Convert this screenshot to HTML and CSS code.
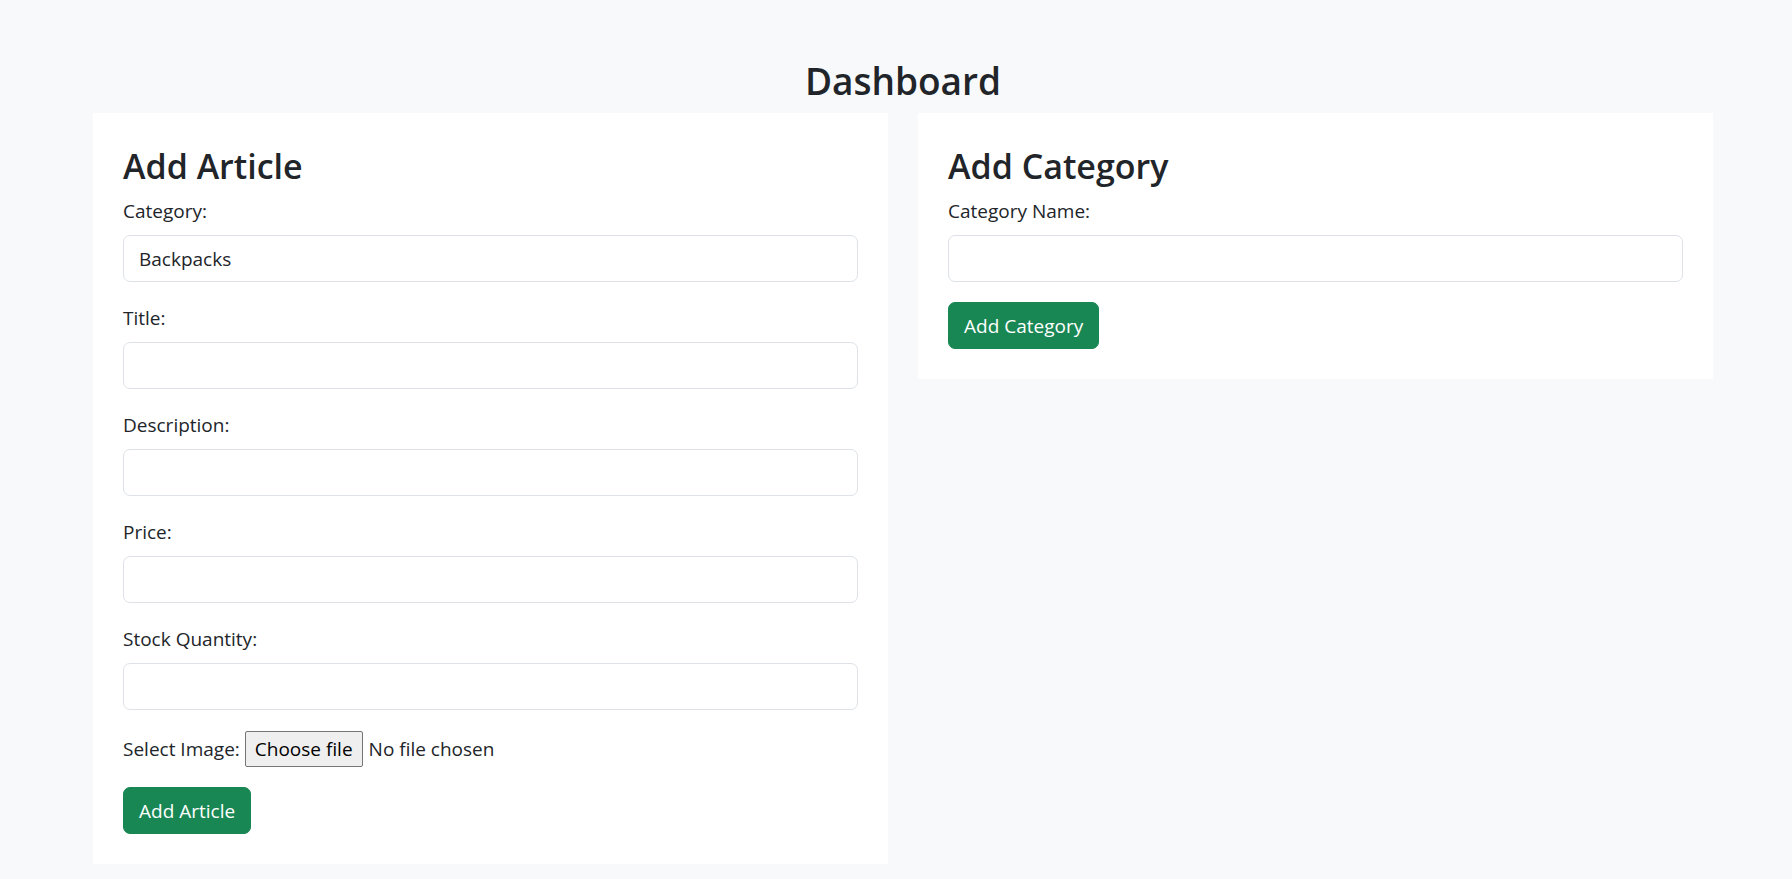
FILE: index.html
```html
<!DOCTYPE html>
<html lang="en">
<head>
<meta charset="utf-8">
<title>Dashboard</title>
<link rel="stylesheet" href="styles.css">
</head>
<body>
<div class="page">
  <h2 class="page-title">Dashboard</h2>
  <div class="columns">
    <section class="card">
      <h3 class="card-title">Add Article</h3>
      <form class="form">
        <div class="field">
          <label class="label" for="cat">Category:</label>
          <input class="control" id="cat" type="text" value="Backpacks">
        </div>
        <div class="field">
          <label class="label" for="title">Title:</label>
          <input class="control" id="title" type="text">
        </div>
        <div class="field">
          <label class="label" for="desc">Description:</label>
          <input class="control" id="desc" type="text">
        </div>
        <div class="field">
          <label class="label" for="price">Price:</label>
          <input class="control" id="price" type="text">
        </div>
        <div class="field">
          <label class="label" for="stock">Stock Quantity:</label>
          <input class="control" id="stock" type="text">
        </div>
        <div class="field file-row">
          <span class="file-label">Select Image:</span>
          <label class="file-picker" for="img">
            <input class="file-input" id="img" type="file">
            <span class="file-btn">Choose file</span>
            <span class="file-name">No file chosen</span>
          </label>
        </div>
        <button class="btn" type="button">Add Article</button>
      </form>
    </section>
    <section class="card">
      <h3 class="card-title">Add Category</h3>
      <form class="form">
        <div class="field">
          <label class="label" for="cname">Category Name:</label>
          <input class="control" id="cname" type="text">
        </div>
        <button class="btn" type="button">Add Category</button>
      </form>
    </section>
  </div>
</div>
</body>
</html>
```
FILE: styles.css
```css
* { box-sizing: border-box; }
html, body { margin: 0; padding: 0; }
body {
  background: #f8f9fa;
  color: #212529;
  font-family: "Open Sans", "Noto Sans", sans-serif;
  font-size: 19px;
  line-height: 30px;
}
.page {
  padding: 55px 79px 0 93px;
}
.page-title {
  margin: 0 0 8px;
  padding-top: 2px;
  text-align: center;
  font-size: 37px;
  line-height: 48px;
  font-weight: 600;
}
.columns {
  display: grid;
  grid-template-columns: 1fr 1fr;
  column-gap: 30px;
  align-items: start;
}
.card {
  background: #fff;
  padding: 30px;
}
.card-title {
  margin: 0 0 8px;
  padding-top: 2px;
  font-size: 34px;
  line-height: 42px;
  font-weight: 600;
}
.form { margin: 0; }
.field { margin-bottom: 20px; }
.label {
  display: block;
  margin-bottom: 9px;
  padding-top: 1px;
  line-height: 30px;
}
.control {
  display: block;
  width: 100%;
  height: 47px;
  padding: 7px 15px;
  font: inherit;
  color: #212529;
  background: #fff;
  border: 1px solid #dee2e6;
  border-radius: 7px;
  outline: none;
}
.file-row {
  display: flex;
  align-items: center;
  height: 37px;
}
.file-label { margin-right: 5px; }
.file-picker {
  display: flex;
  align-items: center;
  cursor: pointer;
}
.file-input { display: none; }
.file-btn {
  display: flex;
  align-items: center;
  height: 36px;
  padding: 0 9px;
  margin-right: 6px;
  background: #efefef;
  color: #000;
  border: 1px solid #767676;
  border-radius: 2px;
}
.file-name { color: #212529; }
.btn {
  display: inline-block;
  height: 47px;
  padding: 7px 15px;
  font: inherit;
  line-height: 30px;
  color: #fff;
  background: #198754;
  border: 1px solid #198754;
  border-radius: 7px;
  cursor: pointer;
}
```
